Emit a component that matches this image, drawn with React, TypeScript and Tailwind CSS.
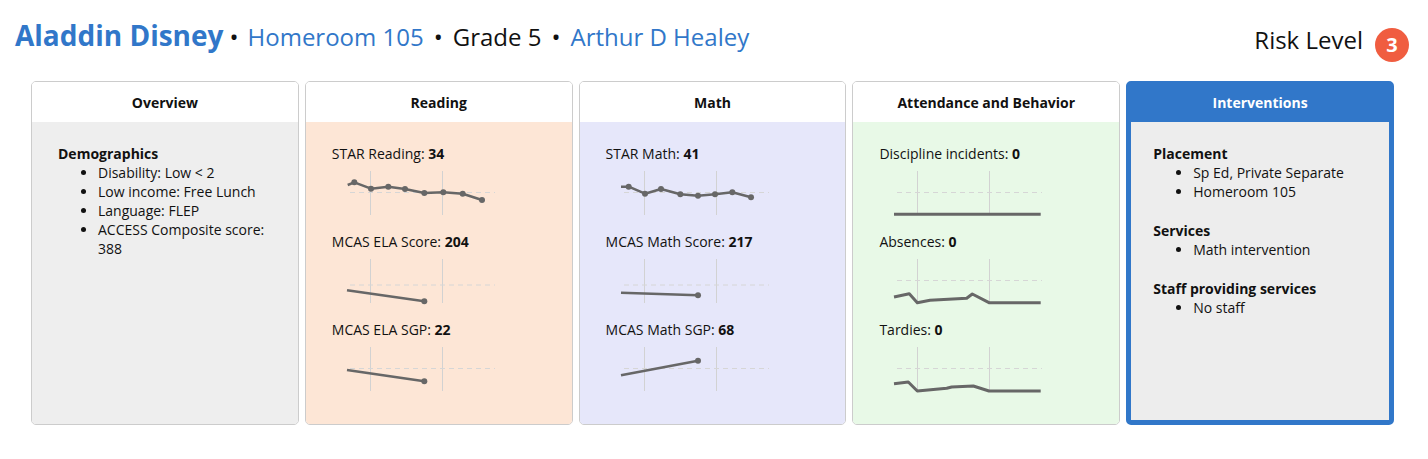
import React from 'react';

type Pt = [number, number];

type ChartProps = {
  dashY: number;
  points: Pt[];
  dots?: number[];
  width?: number;
};

function Spark({ dashY, points, dots = [], width = 2.5 }: ChartProps) {
  const d = points.map((p, i) => `${i === 0 ? 'M' : 'L'}${p[0]},${p[1]}`).join(' ');
  return (
    <svg width={150} height={48} className="ml-[13px] mt-[7px] block">
      <line x1={25.5} y1={1} x2={25.5} y2={45} stroke="#d2d2d2" strokeWidth={1} />
      <line x1={97.5} y1={1} x2={97.5} y2={45} stroke="#d2d2d2" strokeWidth={1} />
      <line x1={5} y1={dashY} x2={150} y2={dashY} stroke="#d6d6d6" strokeWidth={1} strokeDasharray="5 4" />
      <path d={d} fill="none" stroke="#676767" strokeWidth={width} strokeLinejoin="round" />
      {dots.map((i) => (
        <circle key={i} cx={points[i][0]} cy={points[i][1]} r={3} fill="#676767" />
      ))}
    </svg>
  );
}

function Metric({ label, value, children }: { label: string; value: string; children: React.ReactNode }) {
  return (
    <div className="mb-[14px]">
      <div className="leading-[19px]">
        {label}: <b className="font-bold">{value}</b>
      </div>
      {children}
    </div>
  );
}

function Card({ title, body, children }: { title: string; body: string; children: React.ReactNode }) {
  return (
    <div className="h-[344px] flex flex-col rounded-[5px] border border-[#cccccc] overflow-hidden">
      <div className="h-[40px] shrink-0 bg-white flex items-center justify-center text-[14px] font-bold">{title}</div>
      <div className={`flex-1 pl-[26px] pr-[26px] pt-[22px] ${body}`}>{children}</div>
    </div>
  );
}

function Section({ title, items, last }: { title: string; items: string[]; last?: boolean }) {
  return (
    <div className={last ? '' : 'mb-[20px]'}>
      <div className="font-bold leading-[19px]">{title}</div>
      <ul className="list-disc pl-10 leading-[19px]">
        {items.map((it) => (
          <li key={it}>{it}</li>
        ))}
      </ul>
    </div>
  );
}

export default function App() {
  return (
    <div className="w-[1428px] h-[459px] bg-white text-[#111] text-[14px] pt-[17px]" style={{ fontFamily: '"Open Sans", "Liberation Sans", sans-serif' }}>
      <div className="h-[64px] flex items-start justify-between pl-[15px] pr-[19px]">
        <div className="flex items-baseline">
          <span className="text-[28px] font-bold text-[#3177c9] leading-[37px]">Aladdin Disney</span>
          <span className="text-[24px] pl-[6px] pr-[9px]">•</span>
          <span className="text-[24px] text-[#3177c9]">Homeroom 105</span>
          <span className="text-[24px] px-[10px]">•</span>
          <span className="text-[24px]">Grade 5</span>
          <span className="text-[24px] px-[10px]">•</span>
          <span className="text-[24px] text-[#3177c9]">Arthur D Healey</span>
        </div>
        <div className="flex items-start">
          <span className="text-[24px] mt-[6px] leading-[33px]">Risk Level</span>
          <span className="ml-[12px] mt-[11px] w-[34px] h-[34px] rounded-full bg-[#f05d40] text-white font-bold text-[20px] flex items-center justify-center">3</span>
        </div>
      </div>

      <div className="grid grid-cols-5 gap-[6px] pl-[31px] pr-[34px]">
        <Card title="Overview" body="bg-[#eeeeee]">
          <Section title="Demographics" items={['Disability: Low < 2', 'Low income: Free Lunch', 'Language: FLEP', 'ACCESS Composite score: 388']} last />
        </Card>

        <Card title="Reading" body="bg-[#fde6d6]">
          <Metric label="STAR Reading" value="34">
            <Spark
              dashY={22.5}
              points={[[2.7, 15], [9.3, 12.3], [26, 18.7], [43.3, 16.7], [60, 19], [79.3, 23], [98.3, 22.3], [117.7, 23.7], [137, 30]]}
              dots={[1, 2, 3, 4, 5, 6, 7, 8]}
            />
          </Metric>
          <Metric label="MCAS ELA Score" value="204">
            <Spark dashY={27} points={[[2, 32.3], [79.3, 43.3]]} dots={[1]} />
          </Metric>
          <Metric label="MCAS ELA SGP" value="22">
            <Spark dashY={22.5} points={[[2, 24], [79.3, 35.3]]} dots={[1]} />
          </Metric>
        </Card>

        <Card title="Math" body="bg-[#e6e7fa]">
          <Metric label="STAR Math" value="41">
            <Spark
              dashY={22.5}
              points={[[2, 16.7], [9.7, 16.7], [26, 23.7], [42, 19], [61.3, 24.3], [79, 25.7], [96, 24.3], [113.3, 22.3], [132, 27.3]]}
              dots={[1, 2, 3, 4, 5, 6, 7, 8]}
            />
          </Metric>
          <Metric label="MCAS Math Score" value="217">
            <Spark dashY={27} points={[[2, 34.7], [79, 37.3]]} dots={[1]} />
          </Metric>
          <Metric label="MCAS Math SGP" value="68">
            <Spark dashY={22.5} points={[[2, 29.3], [79, 14.7]]} dots={[1]} />
          </Metric>
        </Card>

        <Card title="Attendance and Behavior" body="bg-[#e8f9e7]">
          <Metric label="Discipline incidents" value="0">
            <Spark dashY={22.5} points={[[2, 44.3], [148.7, 44.3]]} width={3} />
          </Metric>
          <Metric label="Absences" value="0">
            <Spark
              dashY={22.5}
              points={[[2, 39], [17.3, 35.7], [25.3, 44.7], [38, 42.3], [74.7, 40.3], [80.3, 36], [97, 44.7], [148.7, 44.7]]}
              width={3}
            />
          </Metric>
          <Metric label="Tardies" value="0">
            <Spark
              dashY={22.5}
              points={[[2, 37.7], [16.3, 36], [25.3, 45], [54.7, 42.3], [59.7, 41], [81.3, 40], [97, 45], [148.7, 45]]}
              width={3}
            />
          </Metric>
        </Card>

        <div className="h-[344px] flex flex-col rounded-[5px] border-[5px] border-[#3177c9] overflow-hidden">
          <div className="h-[36px] shrink-0 bg-[#3177c9] text-white flex items-center justify-center pb-[4px] text-[14px] font-bold">Interventions</div>
          <div className="flex-1 bg-[#ededed] pl-[22px] pt-[22px]">
            <Section title="Placement" items={['Sp Ed, Private Separate', 'Homeroom 105']} />
            <Section title="Services" items={['Math intervention']} />
            <Section title="Staff providing services" items={['No staff']} last />
          </div>
        </div>
      </div>
    </div>
  );
}
